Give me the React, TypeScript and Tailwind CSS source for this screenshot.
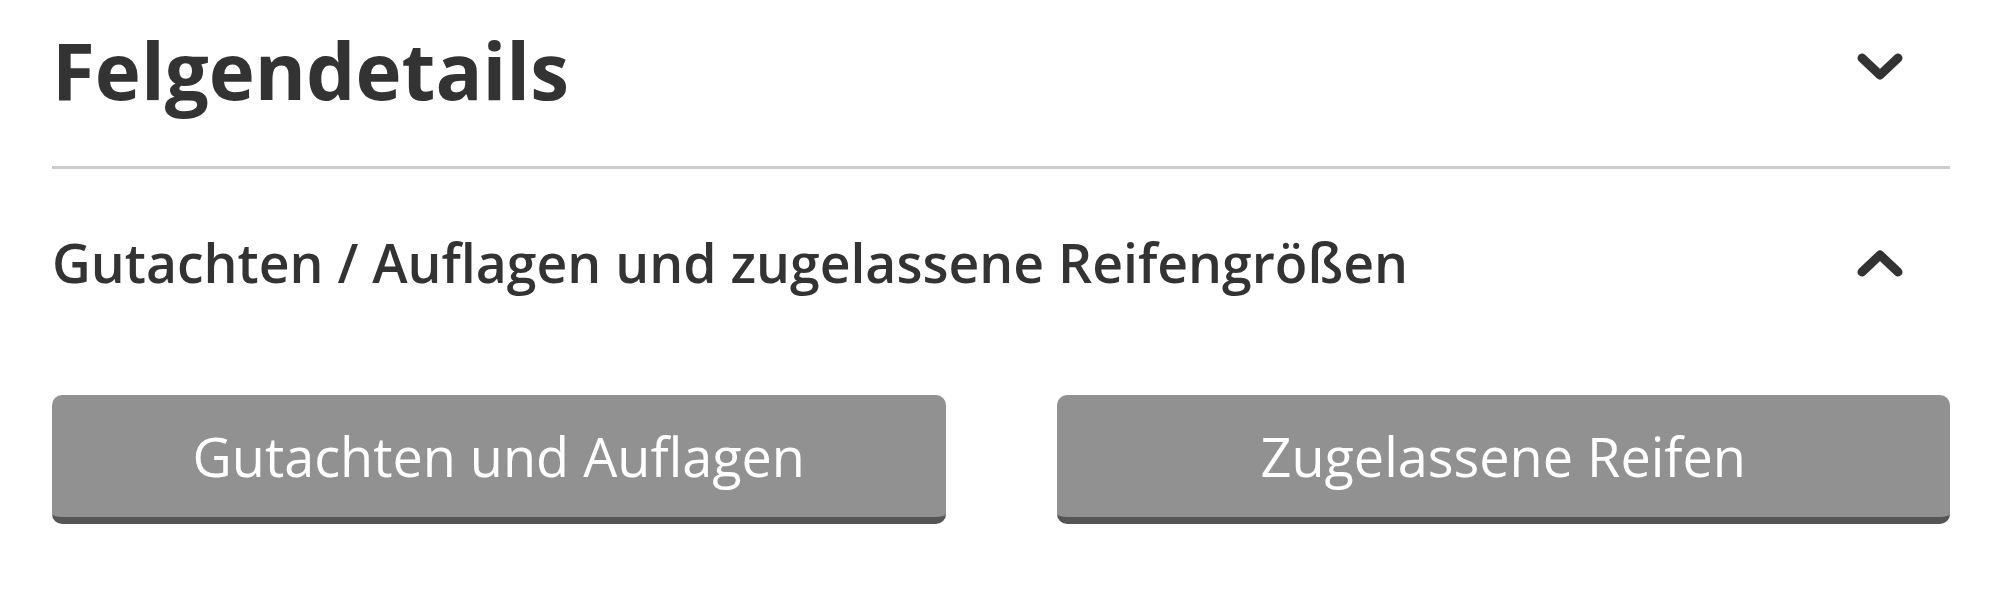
import React from 'react';

function Chevron({ up = false }: { up?: boolean }) {
  return (
    <svg
      width="46"
      height="28"
      viewBox="0 0 46 28"
      className="shrink-0"
      fill="none"
      stroke="#333333"
      strokeWidth="9"
      strokeLinecap="round"
      strokeLinejoin="round"
    >
      {up ? <polyline points="5,23 23,6 41,23" /> : <polyline points="5,5 23,22 41,5" />}
    </svg>
  );
}

function ActionButton({ label }: { label: string }) {
  return (
    <button
      type="button"
      className="flex h-[129px] flex-1 items-center justify-center rounded-[10px] border-b-[7px] border-[#555555] bg-[#919191] text-[54px] leading-[54px] font-normal text-white"
    >
      {label}
    </button>
  );
}

export default function App() {
  return (
    <div className="min-h-[600px] w-full bg-white pl-[52px] pr-[50px] pt-[30px] font-['Open_Sans',sans-serif] text-[#333333]">
      {/* Section header */}
      <div className="flex h-[80px] items-center justify-between">
        <h1 className="text-[78px] leading-[80px] font-bold">Felgendetails</h1>
        <div className="mr-[47px] mb-[6px]">
          <Chevron />
        </div>
      </div>

      <div className="mt-[56px] h-[3px] bg-[#cccccc]" />

      {/* Accordion item */}
      <div className="mt-[68px] flex h-[52px] items-center justify-between">
        <h2 className="text-[53.5px] leading-[52px] font-semibold">
          Gutachten / Auflagen und zugelassene Reifengrößen
        </h2>
        <div className="mr-[47px]">
          <Chevron up />
        </div>
      </div>

      <div className="mt-[106px] flex gap-[111px]">
        <ActionButton label="Gutachten und Auflagen" />
        <ActionButton label="Zugelassene Reifen" />
      </div>
    </div>
  );
}
